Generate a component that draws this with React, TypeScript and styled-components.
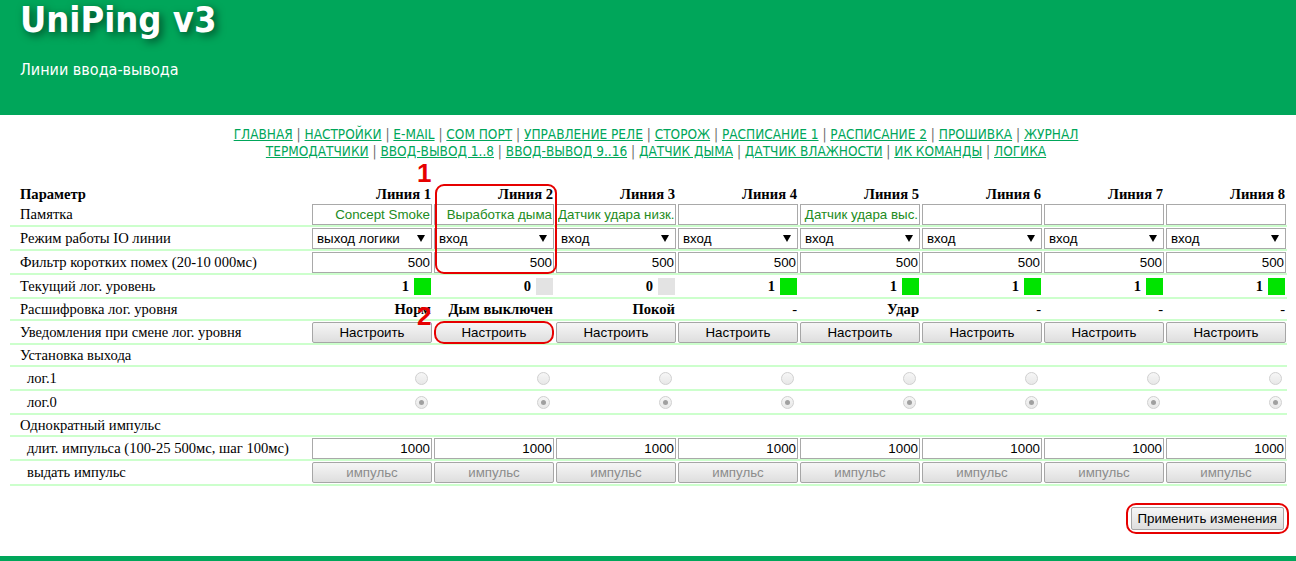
import React from 'react';
import styled, { createGlobalStyle } from 'styled-components';

const GREEN = '#00a65a';
const ROW_LINE = '#ccffcc';
const RED = '#e60000';

const GlobalStyle = createGlobalStyle`
  html, body {
    margin: 0;
    padding: 0;
    background: #fff;
  }
  body {
    font-family: "Liberation Serif", "Times New Roman", serif;
    font-size: 14.6px;
    color: #000;
  }
`;

const Header = styled.header`
  height: 115px;
  background: ${GREEN};
  padding: 0 20px;
  box-sizing: border-box;
  color: #fff;
`;

const Title = styled.h1`
  margin: 0;
  font-family: "DejaVu Sans Condensed", "DejaVu Sans", sans-serif;
  font-weight: bold;
  font-size: 36px;
  line-height: 40px;
  text-shadow: 3px 3px 8px rgba(0, 0, 0, 0.55);
`;

const Subtitle = styled.div`
  margin-top: 20px;
  font-family: "DejaVu Sans Condensed", "DejaVu Sans", sans-serif;
  font-size: 16px;
`;

const Nav = styled.nav`
  margin-top: 11px;
  padding-left: 16px;
  text-align: center;
  font-family: "DejaVu Sans Condensed", "DejaVu Sans", sans-serif;
  font-size: 13.5px;
  line-height: 17px;
  color: #6a6a6a;
`;

const NavLink = styled.a`
  color: ${GREEN};
  text-decoration: underline;
`;

const Main = styled.main`
  padding: 0 7px 0 10px;
`;

const TableWrap = styled.div`
  position: relative;
  margin-top: 25px;
  width: 1277px;
`;

const Row = styled.div<{ $h: number; $noLine?: boolean }>`
  display: grid;
  grid-template-columns: 301px repeat(8, 122px);
  align-items: center;
  height: ${(p) => p.$h}px;
  border-bottom: ${(p) => (p.$noLine ? 'none' : `2px solid ${ROW_LINE}`)};
`;

const Label = styled.div<{ $indent?: boolean; $bold?: boolean }>`
  padding-left: ${(p) => (p.$indent ? 17 : 10)}px;
  font-weight: ${(p) => (p.$bold ? 'bold' : 'normal')};
  white-space: nowrap;
`;

const ValueCell = styled.div<{ $bold?: boolean }>`
  display: flex;
  justify-content: flex-end;
  align-items: center;
  gap: 5px;
  padding-right: 2px;
  font-weight: ${(p) => (p.$bold ? 'bold' : 'normal')};
  white-space: nowrap;
`;

const Ctrl = styled.div`
  padding: 0 1px;
  display: flex;
`;

const TextInput = styled.input<{ $memo?: boolean }>`
  box-sizing: border-box;
  width: 120px;
  height: 21px;
  margin: 0;
  padding: 1px 1px;
  border: 1px solid #a9a9a9;
  font-family: "Liberation Sans", Arial, sans-serif;
  font-size: 13.33px;
  text-align: right;
  color: ${(p) => (p.$memo ? '#228b22' : '#000')};
  background: #fff;
  outline: none;
`;

const SelectBox = styled.div`
  box-sizing: border-box;
  width: 120px;
  height: 21px;
  border: 1px solid #a9a9a9;
  display: flex;
  align-items: center;
  justify-content: space-between;
  padding: 0 6px 0 4px;
  font-family: "Liberation Sans", Arial, sans-serif;
  font-size: 13.33px;
  background: #fff;
`;

const Button = styled.button<{ $disabled?: boolean; $ring?: boolean }>`
  box-sizing: border-box;
  width: 120px;
  height: ${(p) => (p.$ring ? 23 : 21)}px;
  margin: 0;
  padding: 0;
  border: ${(p) => (p.$ring ? `2px solid ${RED}` : '1px solid #a6a6a6')};
  border-radius: ${(p) => (p.$ring ? 10 : 2)}px;
  background: linear-gradient(#f6f6f6, #dedede);
  font-family: "Liberation Sans", Arial, sans-serif;
  font-size: 13.33px;
  color: ${(p) => (p.$disabled ? '#8c8c8c' : '#000')};
`;

const LevelBox = styled.span<{ $on: boolean }>`
  display: inline-block;
  width: 17px;
  height: 17px;
  background: ${(p) => (p.$on ? '#00e400' : '#e3e3e3')};
`;

const RadioCell = styled.div`
  display: flex;
  justify-content: flex-end;
  padding-right: 5px;
`;

const Radio = styled.span<{ $checked?: boolean }>`
  box-sizing: border-box;
  width: 13px;
  height: 13px;
  border-radius: 50%;
  border: 1px solid #d0d0d0;
  background: linear-gradient(#f6f6f6, #e8e8e8);
  display: flex;
  align-items: center;
  justify-content: center;
  &::after {
    content: '';
    width: 5px;
    height: 5px;
    border-radius: 50%;
    background: ${(p) => (p.$checked ? '#a0a0a0' : 'transparent')};
  }
`;

const Marker = styled.div<{ $left: number; $top: number }>`
  position: absolute;
  left: ${(p) => p.$left}px;
  top: ${(p) => p.$top}px;
  font-family: "Liberation Sans", Arial, sans-serif;
  font-weight: bold;
  font-size: 26px;
  line-height: 26px;
  color: ${RED};
`;

const Ring = styled.div`
  position: absolute;
  left: 425px;
  top: -1px;
  width: 122px;
  height: 90px;
  box-sizing: border-box;
  border: 2px solid ${RED};
  border-radius: 9px;
  pointer-events: none;
`;

const Footer = styled.div`
  display: flex;
  justify-content: flex-end;
  padding-top: 17px;
`;

const ApplyRing = styled.div`
  border: 2px solid ${RED};
  border-radius: 10px;
  padding: 2px 3px;
`;

const ApplyButton = styled.button`
  height: 23px;
  padding: 0 6px;
  border: 1px solid #a6a6a6;
  border-radius: 2px;
  background: linear-gradient(#f6f6f6, #dedede);
  font-family: "Liberation Sans", Arial, sans-serif;
  font-size: 13.33px;
  color: #000;
`;

const BottomBar = styled.div`
  position: fixed;
  left: 0;
  right: 0;
  bottom: 0;
  height: 5px;
  background: ${GREEN};
`;

const navRows = [
  ['ГЛАВНАЯ', 'НАСТРОЙКИ', 'E-MAIL', 'COM ПОРТ', 'УПРАВЛЕНИЕ РЕЛЕ', 'СТОРОЖ', 'РАСПИСАНИЕ 1', 'РАСПИСАНИЕ 2', 'ПРОШИВКА', 'ЖУРНАЛ'],
  ['ТЕРМОДАТЧИКИ', 'ВВОД-ВЫВОД 1..8', 'ВВОД-ВЫВОД 9..16', 'ДАТЧИК ДЫМА', 'ДАТЧИК ВЛАЖНОСТИ', 'ИК КОМАНДЫ', 'ЛОГИКА'],
];

type Line = { memo: string; mode: string; level: number; decode: string };

const lines: Line[] = [
  { memo: 'Concept Smoke', mode: 'выход логики', level: 1, decode: 'Норм' },
  { memo: 'Выработка дыма', mode: 'вход', level: 0, decode: 'Дым выключен' },
  { memo: 'Датчик удара низк.', mode: 'вход', level: 0, decode: 'Покой' },
  { memo: '', mode: 'вход', level: 1, decode: '-' },
  { memo: 'Датчик удара выс.', mode: 'вход', level: 1, decode: 'Удар' },
  { memo: '', mode: 'вход', level: 1, decode: '-' },
  { memo: '', mode: 'вход', level: 1, decode: '-' },
  { memo: '', mode: 'вход', level: 1, decode: '-' },
];

function Arrow() {
  return (
    <svg width="8" height="7" viewBox="0 0 8 7">
      <path d="M0 0 H8 L4 7 Z" fill="#000" />
    </svg>
  );
}

export default function App() {
  return (
    <>
      <GlobalStyle />
      <Header>
        <Title>UniPing v3</Title>
        <Subtitle>Линии ввода-вывода</Subtitle>
      </Header>
      <Nav>
        {navRows.map((row, i) => (
          <div key={i}>
            {row.map((item, j) => (
              <React.Fragment key={item}>
                {j > 0 && ' | '}
                <NavLink href="#">{item}</NavLink>
              </React.Fragment>
            ))}
          </div>
        ))}
      </Nav>
      <Main>
        <TableWrap>
          <Row $h={18} $noLine>
            <Label $bold>Параметр</Label>
            {lines.map((_, i) => (
              <ValueCell key={i} $bold>Линия {i + 1}</ValueCell>
            ))}
          </Row>
          <Row $h={22}>
            <Label>Памятка</Label>
            {lines.map((l, i) => (
              <Ctrl key={i}>
                <TextInput $memo defaultValue={l.memo} readOnly />
              </Ctrl>
            ))}
          </Row>
          <Row $h={22}>
            <Label>Режим работы IO линии</Label>
            {lines.map((l, i) => (
              <Ctrl key={i}>
                <SelectBox>
                  <span>{l.mode}</span>
                  <Arrow />
                </SelectBox>
              </Ctrl>
            ))}
          </Row>
          <Row $h={22}>
            <Label>Фильтр коротких помех (20-10 000мс)</Label>
            {lines.map((_, i) => (
              <Ctrl key={i}>
                <TextInput defaultValue="500" readOnly />
              </Ctrl>
            ))}
          </Row>
          <Row $h={22}>
            <Label>Текущий лог. уровень</Label>
            {lines.map((l, i) => (
              <ValueCell key={i} $bold>
                {l.level}
                <LevelBox $on={l.level === 1} />
              </ValueCell>
            ))}
          </Row>
          <Row $h={20}>
            <Label>Расшифровка лог. уровня</Label>
            {lines.map((l, i) => (
              <ValueCell key={i} $bold={l.decode !== '-'}>{l.decode}</ValueCell>
            ))}
          </Row>
          <Row $h={22}>
            <Label>Уведомления при смене лог. уровня</Label>
            {lines.map((_, i) => (
              <Ctrl key={i}>
                <Button $ring={i === 1}>Настроить</Button>
              </Ctrl>
            ))}
          </Row>
          <Row $h={20}>
            <Label>Установка выхода</Label>
          </Row>
          <Row $h={22}>
            <Label $indent>лог.1</Label>
            {lines.map((_, i) => (
              <RadioCell key={i}>
                <Radio />
              </RadioCell>
            ))}
          </Row>
          <Row $h={22}>
            <Label $indent>лог.0</Label>
            {lines.map((_, i) => (
              <RadioCell key={i}>
                <Radio $checked />
              </RadioCell>
            ))}
          </Row>
          <Row $h={20}>
            <Label>Однократный импульс</Label>
          </Row>
          <Row $h={22}>
            <Label $indent>длит. импульса (100-25 500мс, шаг 100мс)</Label>
            {lines.map((_, i) => (
              <Ctrl key={i}>
                <TextInput defaultValue="1000" readOnly />
              </Ctrl>
            ))}
          </Row>
          <Row $h={23}>
            <Label $indent>выдать импульс</Label>
            {lines.map((_, i) => (
              <Ctrl key={i}>
                <Button $disabled>импульс</Button>
              </Ctrl>
            ))}
          </Row>
          <Ring />
          <Marker $left={407} $top={-25}>1</Marker>
          <Marker $left={407} $top={118}>2</Marker>
        </TableWrap>
        <Footer>
          <ApplyRing>
            <ApplyButton>Применить изменения</ApplyButton>
          </ApplyRing>
        </Footer>
      </Main>
      <BottomBar />
    </>
  );
}
